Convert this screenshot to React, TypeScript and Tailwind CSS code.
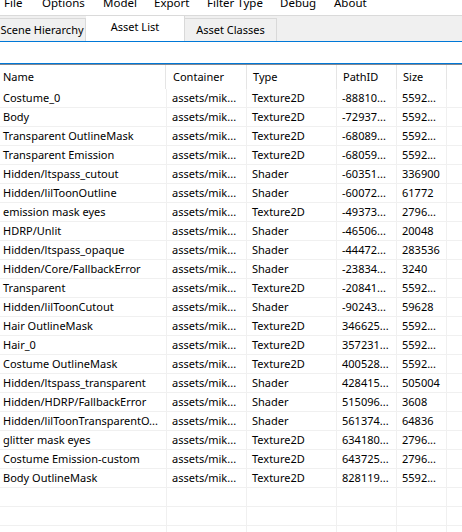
import React from "react";

type Row = [string, string, string, string];

const rows: Row[] = [
  ["Costume_0", "Texture2D", "-88810...", "5592..."],
  ["Body", "Texture2D", "-72937...", "5592..."],
  ["Transparent OutlineMask", "Texture2D", "-68089...", "5592..."],
  ["Transparent Emission", "Texture2D", "-68059...", "5592..."],
  ["Hidden/ltspass_cutout", "Shader", "-60351...", "336900"],
  ["Hidden/lilToonOutline", "Shader", "-60072...", "61772"],
  ["emission mask eyes", "Texture2D", "-49373...", "2796..."],
  ["HDRP/Unlit", "Shader", "-46506...", "20048"],
  ["Hidden/ltspass_opaque", "Shader", "-44472...", "283536"],
  ["Hidden/Core/FallbackError", "Shader", "-23834...", "3240"],
  ["Transparent", "Texture2D", "-20841...", "5592..."],
  ["Hidden/lilToonCutout", "Shader", "-90243...", "59628"],
  ["Hair OutlineMask", "Texture2D", "346625...", "5592..."],
  ["Hair_0", "Texture2D", "357231...", "5592..."],
  ["Costume OutlineMask", "Texture2D", "400528...", "5592..."],
  ["Hidden/ltspass_transparent", "Shader", "428415...", "505004"],
  ["Hidden/HDRP/FallbackError", "Shader", "515096...", "3608"],
  ["Hidden/lilToonTransparentO...", "Shader", "561374...", "64836"],
  ["glitter mask eyes", "Texture2D", "634180...", "2796..."],
  ["Costume Emission-custom", "Texture2D", "643725...", "2796..."],
  ["Body OutlineMask", "Texture2D", "828119...", "5592..."],
];

const menus = ["File", "Options", "Model", "Export", "Filter Type", "Debug", "About"];
const menuX = [4, 42, 103, 154, 207, 280, 334];

const cols = "grid grid-cols-[167px_80px_90px_60px_50px_1fr]";
const base = "h-[19px] border-b border-r border-[#f0f0f0] leading-[18px] whitespace-nowrap overflow-hidden";
const cell = `${base} pl-[5px]`;
const first = `${base} pl-[3px]`;

export default function App() {
  return (
    <div className="w-[462px] h-[532px] overflow-hidden bg-white text-[11px] text-black font-['Noto_Sans',sans-serif]">
      {/* menu strip, scrolled so only the lower half shows */}
      <div className="relative h-[15px] bg-white overflow-hidden text-[11.5px]">
        {menus.map((m, i) => (
          <span key={m} className="absolute top-[-5px] leading-[16px]" style={{ left: menuX[i] }}>
            {m}
          </span>
        ))}
      </div>

      {/* tabs */}
      <div className="flex h-[26px] border-t border-[#dadada] bg-[#f0f0f0] ml-[-14px] whitespace-nowrap">
        <div className="mt-[2px] h-[23px] w-[100px] border border-b-0 border-[#d9d9d9] bg-[#f0f0f0] flex items-center justify-center pl-[12px]">
          Scene Hierarchy
        </div>
        <div className="h-[25px] w-[99px] border-r border-[#d9d9d9] bg-white flex items-center justify-center pb-[3px]">
          Asset List
        </div>
        <div className="mt-[2px] h-[23px] w-[92px] border-t border-r border-[#d9d9d9] bg-[#f0f0f0] flex items-center justify-center">
          Asset Classes
        </div>
      </div>

      {/* filter box (focused) */}
      <div className="h-[23px] border-y border-[#0078d7] bg-white" />

      {/* list view */}
      <div className="border-t border-[#828790]">
        <div className={`${cols} h-[24px]`}>
          {["Name", "Container", "Type", "PathID", "Size", ""].map((h, i) => (
            <div
              key={i}
              className={`h-[24px] leading-[24px] border-r border-[#e5e5e5] whitespace-nowrap ${i === 0 ? "pl-[3px] w-[166px]" : "pl-[6px]"} ${i === 5 ? "border-r-0" : ""}`}
            >
              {h}
            </div>
          ))}
        </div>
        {rows.map((r, idx) => (
          <div key={idx} className={cols}>
            <div className={first}>{r[0]}</div>
            <div className={cell}>assets/mik...</div>
            <div className={cell}>{r[1]}</div>
            <div className={cell}>{r[2]}</div>
            <div className={cell}>{r[3]}</div>
            <div className={`${base} border-r-0`} />
          </div>
        ))}
        {[0, 1, 2].map((k) => (
          <div key={`e${k}`} className={cols}>
            <div className={base} />
            <div className={base} />
            <div className={base} />
            <div className={base} />
            <div className={base} />
            <div className={`${base} border-r-0`} />
          </div>
        ))}
      </div>
    </div>
  );
}
